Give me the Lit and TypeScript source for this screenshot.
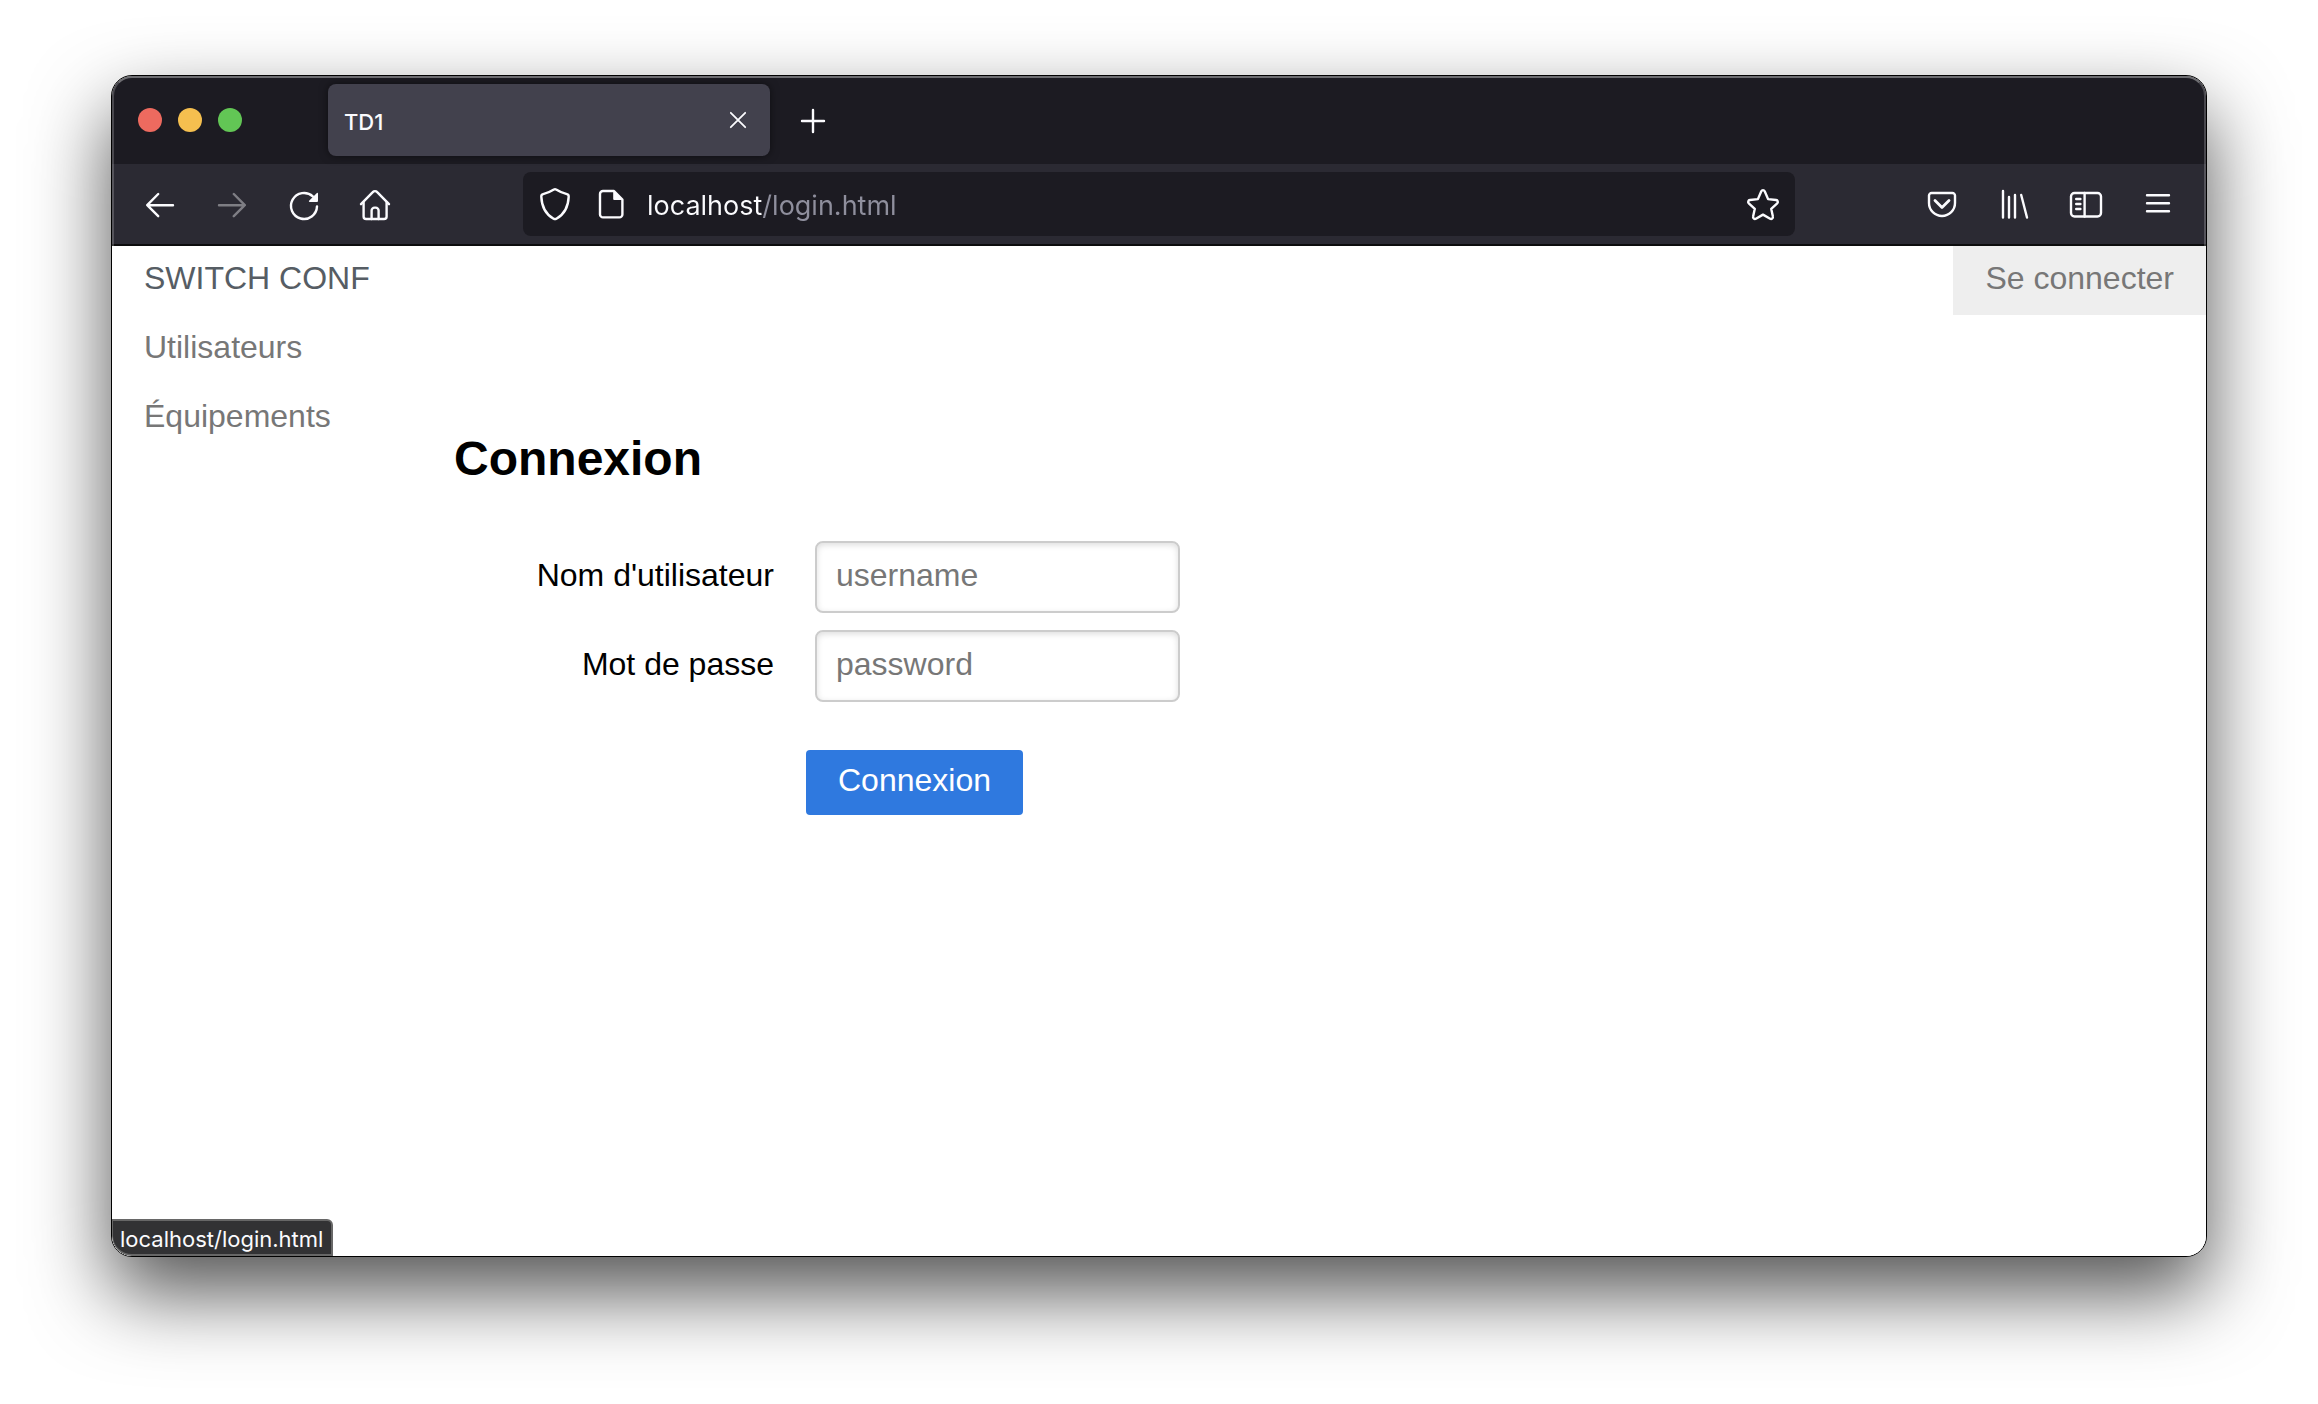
import { LitElement, html, css, svg } from "lit";
import { customElement } from "lit/decorators.js";

const icon = (content: unknown) => html`
  <svg class="icon" viewBox="0 0 32 32" aria-hidden="true">${content}</svg>
`;

const icons = {
  close: icon(svg`<path class="thin" d="M8.8 8.8l14.4 14.4M23.2 8.8L8.8 23.2" />`),
  plus: icon(svg`<path d="M16 6v22M5 17h22" />`),
  back: icon(svg`<path d="M29 17.2H3.4M14.2 6L3.2 17.2L14.2 28.2" />`),
  forward: icon(svg`<path d="M3 17.2h25.6M17.8 6l11 11.2l-11 11" />`),
  reload: icon(svg`
    <path d="M29 18.4A13 13 0 1 1 24.8 8.4" />
    <path class="solid" d="M30 5.4v7.6a1 1 0 0 1-1 1h-7.4a.7.7 0 0 1-.5-1.2l7.8-7.8a.7.7 0 0 1 1.1.4z" />
  `),
  home: icon(svg`
    <path d="M1 16.2L12.8 4.1a3 3 0 0 1 4.4 0L29 16.2" />
    <path d="M3.6 14.4V28.4a2.6 2.6 0 0 0 2.6 2.6H24a2.6 2.6 0 0 0 2.6-2.6V14.4" />
    <path d="M11.6 31v-8.4a3 3 0 0 1 3-3h1a3 3 0 0 1 3 3V31" />
  `),
  shield: icon(svg`
    <path d="M14.9 1.5a2.4 2.4 0 0 1 2.2 0C20.6 3.7 24.2 5.2 27.9 6.1a2.4 2.4 0 0 1 1.8 2.5C29.3 18.600 25.800 26 17.400 30.700a3 3 0 0 1-2.800 0C6.200 26 2.700 18.600 2.300 8.600a2.400 2.400 0 0 1 1.800-2.500C7.800 5.200 11.400 3.700 14.900 1.500z" />
  `),
  page: icon(svg`
    <path d="M19 3H8a3 3 0 0 0-3 3v20.400a3 3 0 0 0 3 3H24.400a3 3 0 0 0 3-3V11.500L19 3z" />
    <path class="solid" d="M18.200 2.500v8.500a1 1 0 0 0 1 1h8.800z" />
  `),
  star: icon(svg`
    <path d="M14.300 3.200a1.900 1.900 0 0 1 3.400 0l3.400 7.900l8 .9a1.900 1.900 0 0 1 1.100 3.300l-6 5.500l1.700 7.800a1.900 1.900 0 0 1-2.800 2.100L16 26.600l-7.100 4.100a1.900 1.900 0 0 1-2.800-2.100l1.700-7.800l-6-5.500a1.900 1.900 0 0 1 1.100-3.300l8-.9z" />
  `),
  pocket: icon(svg`
    <path d="M5.600 5h20.800A2.600 2.600 0 0 1 29 7.600V15a13 13 0 0 1-26 0V7.600A2.600 2.600 0 0 1 5.600 5z" />
    <path class="bold" d="M9 12.400l7 7l7-7" />
  `),
  library: icon(svg`<path d="M5 3v26.500M11 9v20.500M17 7v22.500M23.200 7l5.800 22.500" />`),
  sidebar: icon(svg`
    <rect x="1" y="5" width="30" height="23.500" rx="3.500" />
    <path d="M14.600 5v23.500M6.200 11h4.200M6.200 16h4.200M6.200 21h4.200" />
  `),
  menu: icon(svg`<path d="M5 7.200h22M5 15.200h22M5 23.200h22" />`),
};

const iconStyles = css`
  * {
    box-sizing: border-box;
  }
  button {
    display: flex;
    align-items: center;
    justify-content: center;
    margin: 0;
    padding: 0;
    border: 0;
    background: none;
    color: inherit;
    font: inherit;
  }
  .icon {
    display: block;
    flex: none;
    width: 32px;
    height: 32px;
    overflow: visible;
    fill: none;
    stroke: currentColor;
    stroke-width: 2.4;
    stroke-linecap: round;
    stroke-linejoin: round;
  }
  .icon .thin {
    stroke-width: 1.8;
  }
  .icon .bold {
    stroke-width: 2.8;
  }
  .icon .solid {
    fill: currentColor;
    stroke: none;
  }
`;

@customElement("browser-tabs")
export class BrowserTabs extends LitElement {
  static styles = [
    iconStyles,
    css`
      :host {
        display: flex;
        align-items: center;
        padding: 8px 26px;
        background: #1c1b22;
        color: #fbfbfe;
        font: 500 22px/28px Inter, "Open Sans", sans-serif;
      }
      .lights {
        display: flex;
        gap: 16px;
        margin-right: 86px;
      }
      .light {
        width: 24px;
        height: 24px;
        border-radius: 50%;
      }
      .red {
        background: #ed6a5f;
      }
      .amber {
        background: #f5bf4f;
      }
      .green {
        background: #62c655;
      }
      .tab {
        display: flex;
        align-items: center;
        justify-content: space-between;
        width: 442px;
        height: 72px;
        padding: 0 16px;
        border-radius: 8px;
        background: #42414d;
        box-shadow: 0 0 8px rgba(0, 0, 0, 0.5);
      }
      .name {
        padding-top: 3px;
      }
      .add {
        margin-left: 27px;
      }
    `,
  ];

  render() {
    return html`
      <div class="lights">
        <button class="light red" aria-label="Fermer la fenêtre"></button>
        <button class="light amber" aria-label="Réduire"></button>
        <button class="light green" aria-label="Agrandir"></button>
      </div>
      <div class="tab">
        <span class="name">TD1</span>
        <button aria-label="Fermer l'onglet">${icons.close}</button>
      </div>
      <button class="add" aria-label="Nouvel onglet">${icons.plus}</button>
    `;
  }
}

@customElement("browser-toolbar")
export class BrowserToolbar extends LitElement {
  static styles = [
    iconStyles,
    css`
      :host {
        display: flex;
        align-items: center;
        justify-content: space-between;
        padding: 8px 12px;
        border-bottom: 2px solid #0c0c0d;
        background: #2b2a33;
        color: #fbfbfe;
      }
      .group {
        display: flex;
        flex: 1;
      }
      .end {
        justify-content: flex-end;
      }
      .group button {
        width: 72px;
        height: 64px;
      }
      .group button:disabled {
        opacity: 0.4;
      }
      .address {
        display: flex;
        align-items: center;
        flex: 0 1 1272px;
        height: 64px;
        padding: 0 16px;
        border-radius: 8px;
        background: #1c1b22;
      }
      .site {
        display: flex;
        gap: 24px;
        margin-right: 20px;
      }
      .url {
        flex: 1;
        min-width: 0;
        height: 42px;
        margin: 0;
        padding: 2px 0 0;
        border: 0;
        outline: 0;
        background: linear-gradient(90deg, #fbfbfe 116px, #8f8f9d 116px);
        background-clip: text;
        -webkit-background-clip: text;
        color: #fbfbfe;
        -webkit-text-fill-color: transparent;
        font: 400 27px/40px Inter, "Open Sans", sans-serif;
      }
    `,
  ];

  render() {
    return html`
      <div class="group">
        <button aria-label="Page précédente">${icons.back}</button>
        <button aria-label="Page suivante" disabled>${icons.forward}</button>
        <button aria-label="Actualiser">${icons.reload}</button>
        <button aria-label="Accueil">${icons.home}</button>
      </div>
      <div class="address">
        <div class="site">
          <button aria-label="Protection">${icons.shield}</button>
          <button aria-label="Informations du site">${icons.page}</button>
        </div>
        <input class="url" type="text" aria-label="Adresse" value="localhost/login.html" />
        <button aria-label="Ajouter aux favoris">${icons.star}</button>
      </div>
      <div class="group end">
        <button aria-label="Pocket">${icons.pocket}</button>
        <button aria-label="Bibliothèque">${icons.library}</button>
        <button aria-label="Panneau latéral">${icons.sidebar}</button>
        <button aria-label="Menu">${icons.menu}</button>
      </div>
    `;
  }
}

@customElement("login-page")
export class LoginPage extends LitElement {
  static styles = css`
    * {
      box-sizing: border-box;
    }
    :host {
      display: flex;
      align-items: flex-start;
      background: #fff;
      color: #000;
      font: 32px/37px "Liberation Sans", Arial, sans-serif;
    }
    .menu {
      display: flex;
      flex-direction: column;
      flex: none;
      width: 342px;
    }
    .link {
      padding: 14px 32px 18px;
      color: #777;
      text-decoration: none;
    }
    .brand {
      color: #565d64;
    }
    .current {
      background: #eee;
    }
    .main {
      flex: 1;
      padding: 185px 0 32px;
    }
    .title {
      margin: 0 0 54px;
      font-size: 48px;
      line-height: 56px;
    }
    .form {
      display: flex;
      flex-direction: column;
      gap: 17px;
    }
    .row {
      display: flex;
      gap: 41px;
    }
    .label {
      width: 320px;
      padding-top: 16px;
      text-align: right;
    }
    .field {
      width: 365px;
      margin: 0;
      padding: 14px 19px 17px;
      border: 2px solid #ccc;
      border-radius: 8px;
      outline: 0;
      background: #fff;
      box-shadow: inset 0 2px 6px #ddd;
      color: #000;
      font: inherit;
    }
    .field::placeholder {
      color: #777;
    }
    .submit {
      align-self: flex-start;
      margin: 31px 0 0 352px;
      padding: 12px 32px 16px;
      border: 0;
      border-radius: 4px;
      background: #2f79df;
      color: #fff;
      font: inherit;
    }
  `;

  render() {
    return html`
      <nav class="menu">
        <a class="link brand" href="#">SWITCH CONF</a>
        <a class="link" href="#utilisateurs">Utilisateurs</a>
        <a class="link" href="#equipements">Équipements</a>
      </nav>
      <main class="main">
        <h1 class="title">Connexion</h1>
        <form class="form">
          <div class="row">
            <label class="label" for="username">Nom d'utilisateur</label>
            <input class="field" id="username" type="text" placeholder="username" />
          </div>
          <div class="row">
            <label class="label" for="password">Mot de passe</label>
            <input class="field" id="password" type="password" placeholder="password" />
          </div>
          <button class="submit" type="submit">Connexion</button>
        </form>
      </main>
      <a class="link current" href="#login">Se connecter</a>
    `;
  }
}

@customElement("app-root")
export class AppRoot extends LitElement {
  static styles = css`
    * {
      box-sizing: border-box;
    }
    :host {
      display: flex;
      box-sizing: border-box;
      min-height: 100vh;
      padding: 75px 111px 147px;
      background: #fff;
    }
    .window {
      position: relative;
      display: flex;
      flex-direction: column;
      flex: 1;
      min-width: 0;
      border: 1px solid #000;
      border-radius: 21px;
      background: #fff;
      box-shadow: 0 36px 80px rgba(0, 0, 0, 0.68);
      overflow: hidden;
    }
    .chrome {
      position: relative;
    }
    .chrome::after {
      content: "";
      position: absolute;
      inset: 0;
      border: 2px solid rgba(255, 255, 255, 0.2);
      border-top-color: rgba(255, 255, 255, 0.36);
      border-bottom: 0;
      border-radius: 20px 20px 0 0;
      pointer-events: none;
    }
    .page {
      flex: 1;
    }
    .status {
      position: absolute;
      left: 0;
      bottom: 0;
      padding: 4px 8px 1px 7px;
      border: 2px solid #676767;
      border-left-width: 1px;
      border-radius: 0 6px 0 20px;
      background: #323234;
      color: #fbfbfe;
      font: 400 22px/28px Inter, "Open Sans", sans-serif;
    }
  `;

  render() {
    return html`
      <div class="window">
        <div class="chrome">
          <browser-tabs></browser-tabs>
          <browser-toolbar></browser-toolbar>
        </div>
        <login-page class="page"></login-page>
        <div class="status">localhost/login.html</div>
      </div>
    `;
  }
}
